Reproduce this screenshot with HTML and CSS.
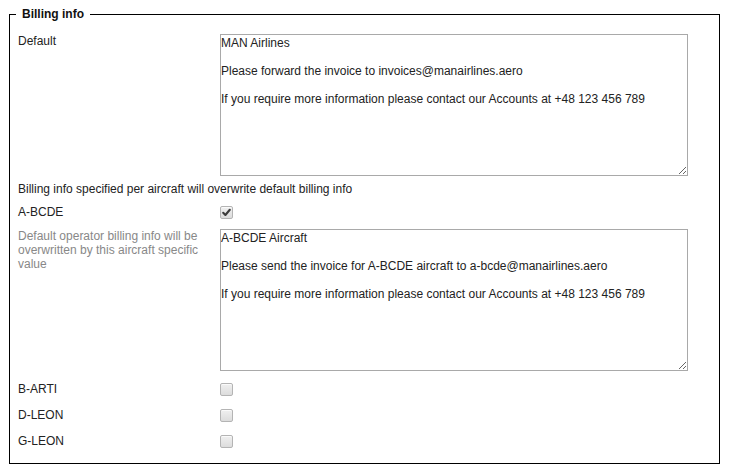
FILE: index.html
```html
<!DOCTYPE html>
<html>
<head>
<meta charset="utf-8">
<link rel="stylesheet" href="styles.css">
</head>
<body>
<fieldset class="box">
  <legend class="box-title">Billing info</legend>
  <div class="row row-text">
    <div class="label">Default</div>
    <textarea class="area">MAN Airlines

Please forward the invoice to invoices@manairlines.aero

If you require more information please contact our Accounts at +48 123 456 789</textarea>
  </div>
  <div class="note">Billing info specified per aircraft will overwrite default billing info</div>
  <div class="row row-check first-check">
    <div class="label">A-BCDE</div>
    <span class="check checked"><svg viewBox="0 0 13 13" width="13" height="13"><path d="M3.2 6.8 L5.4 9 L9.8 3.8" fill="none" stroke="#3c3c3c" stroke-width="2.1" stroke-linecap="round" stroke-linejoin="round"/></svg></span>
  </div>
  <div class="row row-text aircraft">
    <div class="label hint">Default operator billing info will be overwritten by this aircraft specific value</div>
    <textarea class="area">A-BCDE Aircraft

Please send the invoice for A-BCDE aircraft to a-bcde@manairlines.aero

If you require more information please contact our Accounts at +48 123 456 789</textarea>
  </div>
  <div class="row row-check after-area">
    <div class="label">B-ARTI</div>
    <span class="check"></span>
  </div>
  <div class="row row-check">
    <div class="label">D-LEON</div>
    <span class="check"></span>
  </div>
  <div class="row row-check">
    <div class="label">G-LEON</div>
    <span class="check"></span>
  </div>
</fieldset>
</body>
</html>
```

FILE: styles.css
```css
html, body {
  margin: 0;
  padding: 0;
  background: #fff;
}
body {
  font-family: "Liberation Sans", Arial, sans-serif;
  font-size: 12px;
  line-height: 14px;
  color: #222;
}
.box {
  margin: 7px 9px 5px 9px;
  border: 1px solid #000;
  padding: 13px 8px 15px 8px;
  min-width: 0;
}
.box-title {
  font-weight: bold;
  font-size: 12px;
  line-height: 14px;
  padding: 0 6px;
  margin-left: -2px;
  color: #111;
}
.row {
  display: grid;
  grid-template-columns: 202px 468px;
  align-items: start;
}
.label {
  padding-right: 4px;
}
.hint {
  color: #888;
}
.area {
  box-sizing: border-box;
  width: 468px;
  height: 142px;
  margin: 0;
  padding: 1px 0 0 0;
  border: 1px solid #a9a9a9;
  font-family: "Liberation Sans", Arial, sans-serif;
  font-size: 12px;
  line-height: 14px;
  color: #222;
  resize: both;
  overflow: hidden;
  display: block;
}
.note {
  margin-top: 6px;
}
.row-check {
  margin-top: 12px;
}
.row-check .label {
  line-height: 14px;
}
.first-check {
  margin-top: 9px;
}
.aircraft {
  margin-top: 10px;
}
.after-area {
  margin-top: 11px;
}
.check {
  box-sizing: border-box;
  display: block;
  width: 13px;
  height: 13px;
  margin-top: 1px;
  border: 1px solid #b4b4b4;
  border-radius: 2px;
  background: linear-gradient(#f0f0f0, #dcdcdc);
  box-shadow: inset 0 1px 0 #fafafa;
  position: relative;
}
.check svg {
  position: absolute;
  left: -1px;
  top: -1px;
}
```
